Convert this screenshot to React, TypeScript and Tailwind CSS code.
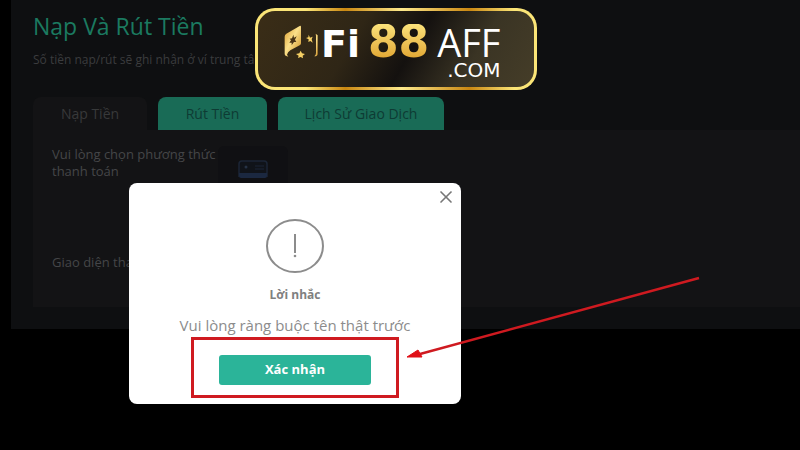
import React from 'react'
import { X } from 'lucide-react'

function LogoMark() {
    return (
        <svg viewBox="0 0 108 105" className="w-9 h-[35px] shrink-0" aria-hidden="true">
            <defs>
                <linearGradient id="mark-gold" x1="0" y1="0" x2="1" y2="1">
                    <stop offset="0" stopColor="#d89a2c" />
                    <stop offset="0.45" stopColor="#fbe08a" />
                    <stop offset="1" stopColor="#c98a1e" />
                </linearGradient>
            </defs>
            <path
                d="M5 38Q5 32 10 29L50 6Q54 4 54 9V58Q54 62 50 64L22 79Q14 84 12 92L16 98L8 95Q5 93 5 89Z"
                fill="url(#mark-gold)"
            />
            <path d="M31 32L33 41L41 37L36 47L40 54L33 54L26 64L26 56L19 56L24 49L20 44L27 43Z" fill="#4a3416" />
            <path d="M77 32L81 41L89 38L86 46L89 56L82 51L76 54L77 46L69 42L76 40Z" fill="#f6d064" />
            <path d="M53 80L57 88L66 90L59 95L60 103L53 99L45 102L47 95L39 90L49 88Z" fill="#f6d064" />
            <path d="M98 29L104 34V90Q104 97 94 97Q99 94 99 87V36Z" fill="url(#mark-gold)" />
        </svg>
    )
}

function Banner() {
    return (
        <div className="absolute top-2 left-[255px] z-20 w-[282px] h-[82px] rounded-[20px] p-[3px] bg-[linear-gradient(90deg,#fbe577_0%,#fbe577_18%,#c98712_32%,#fde98c_52%,#c98712_76%,#fbe577_92%)]">
            <div className="h-full rounded-[17px] bg-[linear-gradient(120deg,#3a2d17_0%,#2f2616_35%,#14110f_55%,#3a3424_76%,#453d28_100%)] flex items-start pl-[25px] pt-[13px]">
                <LogoMark />
                <div className="flex flex-col items-end pl-[2px]">
                    <div className="flex items-baseline h-9 gap-2 font-['DejaVu_Sans',sans-serif] leading-9">
                        <span className="text-[38px] font-bold text-white">Fi</span>
                        <span className="text-[44px] font-bold text-transparent bg-clip-text bg-gradient-to-b from-[#fbe27a] to-[#e0a52e]">88</span>
                        <span className="text-[38px] font-['Open_Sans',sans-serif] text-white">AFF</span>
                    </div>
                    <span className="font-['DejaVu_Sans',sans-serif] text-[20px] leading-5 text-white">.COM</span>
                </div>
            </div>
        </div>
    )
}

function CardIcon() {
    return (
        <svg viewBox="0 0 30 20" className="w-[30px] h-5" aria-hidden="true">
            <path d="M1 17V4Q1 1 4 1H26Q29 1 29 4V17" fill="#101319" stroke="#1b2536" strokeWidth="1.5" />
            <path d="M1 13H29V16Q29 18 27 18H3Q1 18 1 16Z" fill="#1b2840" />
            <circle cx="8" cy="7" r="1.5" fill="#263245" />
            <path d="M17 6H26M17 9H26" stroke="#1b2536" />
        </svg>
    )
}

function ReminderDialog() {
    return (
        <div
            role="dialog"
            aria-labelledby="reminder-title"
            className="absolute top-[183px] left-[129px] z-10 w-[332px] bg-white rounded-lg flex flex-col items-center pt-9 pb-[6px]"
        >
            <button type="button" aria-label="Đóng" className="absolute top-1 right-[5px] text-[#777]">
                <X className="w-5 h-5" />
            </button>
            <svg viewBox="0 0 58 54" className="w-[58px] h-[54px]" aria-hidden="true">
                <ellipse cx="29" cy="27" rx="28" ry="26" fill="none" stroke="#8c8c8c" strokeWidth="2" />
                <path d="M29 15V34" stroke="#8c8c8c" strokeWidth="2" />
                <circle cx="29" cy="37" r="1.3" fill="#8c8c8c" />
            </svg>
            <h2 id="reminder-title" className="mt-3 text-[12px] leading-5 font-bold text-[#808080]">Lời nhắc</h2>
            <p className="mt-2 text-[15px] leading-6 text-[#8c8c8c]">Vui lòng ràng buộc tên thật trước</p>
            <div className="border-[3px] border-[#cf1a20] px-[25px] pt-[15px] pb-[10px]">
                <button type="button" className="block w-[152px] h-[30px] rounded-[3px] bg-[#2bb499] text-[13px] font-bold text-white">
                    Xác nhận
                </button>
            </div>
        </div>
    )
}

export default function App() {
    return (
        <div className="relative min-h-screen bg-black pl-[11px] font-['Open_Sans',sans-serif] overflow-hidden">
            <main className="bg-[#0e0f11] pl-[22px] pt-3 pb-[22px]">
                <h1 className="text-[23px] leading-7 text-[#1b7a60]">Nạp Và Rút Tiền</h1>
                <p className="mt-2 text-[12px] leading-6 text-[#3b3c3e]">Số tiền nạp/rút sẽ ghi nhận ở ví trung tâm</p>

                <nav className="mt-[25px] flex gap-[11px] text-[14px] leading-[33px] text-center">
                    <button type="button" className="w-[114px] rounded-t-lg bg-[#131315] text-[#38393a]">Nạp Tiền</button>
                    <button type="button" className="w-[109px] rounded-t-lg bg-[#196b56] text-[#0e3b34]">Rút Tiền</button>
                    <button type="button" className="w-[166px] rounded-t-lg bg-[#196b56] text-[#0e3b34]">Lịch Sử Giao Dịch</button>
                </nav>

                <section className="bg-[#131315] pl-[19px] pt-4 h-[177px] text-[13px] leading-[17px] text-[#454648]">
                    <div className="flex">
                        <p className="w-[166px]">Vui lòng chọn phương thức thanh toán</p>
                        <div className="w-[70px] h-11 rounded-md bg-[#101013] flex justify-center pt-[14px]">
                            <CardIcon />
                        </div>
                    </div>
                    <p className="mt-16">Giao diện thanh toán</p>
                </section>
            </main>

            <Banner />
            <ReminderDialog />

            {/* Pointer to the confirm button */}
            <svg viewBox="0 0 295 84" className="absolute top-[276px] left-[406px] z-20 w-[295px] h-[84px]" aria-hidden="true">
                <path d="M293 2L14 78" stroke="#cf1a20" strokeWidth="2.4" />
                <path d="M1 81L12 74L16 81Z" fill="#e01018" stroke="#e01018" />
            </svg>
        </div>
    )
}
